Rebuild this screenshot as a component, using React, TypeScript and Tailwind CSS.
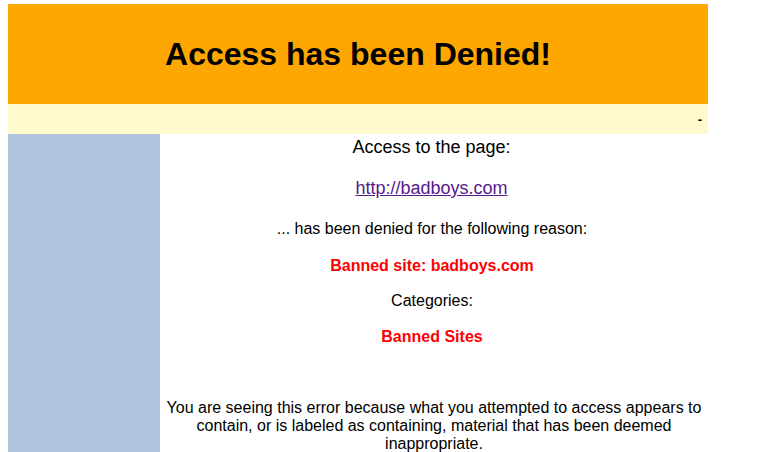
import React from "react";

const font = { fontFamily: '"Liberation Sans", Arial, Helvetica, sans-serif' };

const App = () => {
  return (
    <div className="min-h-screen bg-white pt-1 pl-2 text-black" style={font}>
      <div className="w-[700px]">
        <div className="h-[100px] bg-[#FEA700] flex items-center justify-center">
          <h1 className="text-[32px] leading-[37px] font-bold">Access has been Denied!</h1>
        </div>
        <div className="h-[30px] bg-[#FFFACD] flex items-center justify-end pr-[6px] pt-[2px]">
          <span className="text-[13px] font-bold">-</span>
        </div>
        <div className="flex h-[540px]">
          <div className="w-[152px] bg-[#B0C4DE]" />
          <div className="flex-1 flex flex-col items-center text-center px-[2px] pt-[3px] text-[16px]">
            <div className="text-[18px] leading-[21px] h-[21px] mr-[5px]">Access to the page:</div>
            <div className="text-[18px] leading-[21px] h-[21px] mt-5 mr-[5px]">
              <a href="#" className="text-[#551A8B] underline">
                http://badboys.com
              </a>
            </div>
            <div className="leading-[18px] mt-[21px] mr-[4px]">... has been denied for the following reason:</div>
            <div className="leading-[18px] mt-[19px] mr-[4px] font-bold text-[#FF0000]">Banned site: badboys.com</div>
            <div className="leading-[18px] mt-[17px] mr-[4px]">Categories:</div>
            <div className="leading-[18px] mt-[18px] mr-[4px] font-bold text-[#FF0000]">Banned Sites</div>
            <p className="leading-[18px] mt-[53px]">
              You are seeing this error because what you attempted to access appears to contain, or is
              labeled as containing, material that has been deemed inappropriate.
            </p>
          </div>
        </div>
      </div>
    </div>
  );
};

export default App;
